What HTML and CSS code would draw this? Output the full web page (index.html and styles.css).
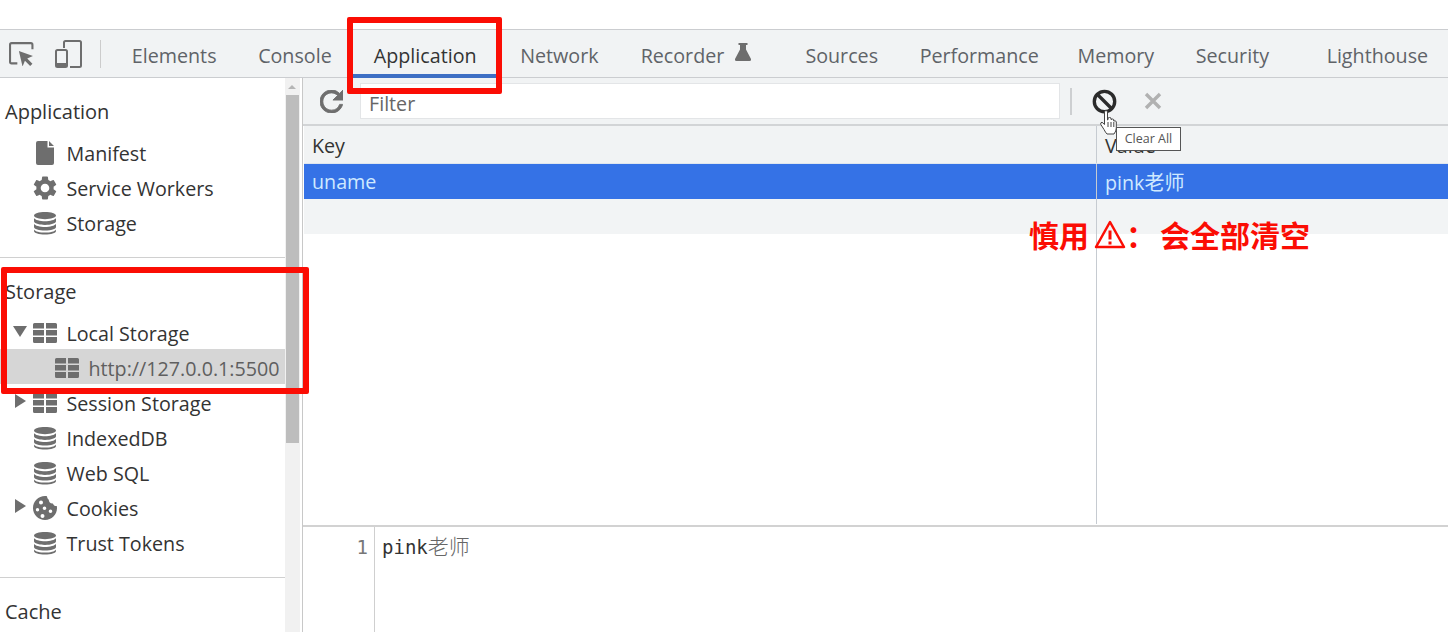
FILE: index.html
```html
<!DOCTYPE html>
<html lang="en">
<head>
<meta charset="utf-8">
<title>DevTools Application</title>
<link rel="stylesheet" href="styles.css">
</head>
<body>
<svg class="defs" width="0" height="0" aria-hidden="true">
  <symbol id="db" viewBox="0 0 24 24"><path d="M12 1C6 1 1 2.6 1 4.6S6 8.2 12 8.2s11-1.6 11-3.6S18 1 12 1zM1 7v3.2c0 2 5 3.7 11 3.7s11-1.7 11-3.700V7c-1 2-6 3.200-11 3.200S2 9 1 7zm0 5.800V16c0 2 5 3.600 11 3.600S23 18 23 16v-3.200c-1 2-6 3.200-11 3.200s-10-1.200-11-3.200zm0 5.600V20c0 2 5 3.600 11 3.600S23 22 23 20v-1.600c-1 2-6 3.200-11 3.200S2 20.400 1 18.400z"/></symbol>
  <symbol id="grid" viewBox="0 0 24 20"><path d="M0 1.500Q0 0 1.500 0H11v5.500H0zM13 0h9.500Q24 0 24 1.500v4H13zM0 7h11v5.500H0zM13 7h11v5.500H13zM0 14h11v6H1.500Q0 20 0 18.500zM13 14h11v4.500Q24 20 22.500 20H13z"/></symbol>
  <symbol id="gear" viewBox="2 2 20 20"><path d="M19.140 12.940c.04-.3.06-.61.06-.94 0-.32-.02-.64-.07-.94l2.030-1.580a.49.49 0 0 0 .12-.61l-1.920-3.320a.488.488 0 0 0-.59-.22l-2.390.96c-.5-.38-1.030-.7-1.620-.94l-.36-2.540a.484.484 0 0 0-.48-.41h-3.840c-.24 0-.43.17-.47.41l-.36 2.540c-.59.24-1.130.57-1.620.94l-2.390-.96c-.22-.08-.47 0-.59.22L2.740 8.870c-.12.21-.08.47.12.61l2.030 1.580c-.05.3-.09.63-.09.94s.02.64.07.94l-2.030 1.580a.49.49 0 0 0-.12.61l1.920 3.320c.12.22.37.29.59.22l2.390-.96c.5.38 1.030.7 1.620.94l.36 2.540c.05.24.24.41.48.41h3.840c.24 0 .44-.17.47-.41l.36-2.540c.59-.24 1.130-.56 1.620-.94l2.390.96c.22.08.47 0 .59-.22l1.920-3.320c.12-.22.07-.47-.12-.61l-2.010-1.580zM12 15.600c-1.980 0-3.600-1.620-3.600-3.600s1.620-3.600 3.600-3.600 3.600 1.620 3.600 3.600-1.620 3.600-3.600 3.600z"/></symbol>
  <symbol id="file" viewBox="0 0 18 24"><path d="M2 0h9.500v6.500H18V22q0 2-2 2H2q-2 0-2-2V2q0-2 2-2zM13 0l5 5h-5z"/></symbol>
  <symbol id="cookie" viewBox="0 0 24 24"><path fill-rule="evenodd" d="M12 0C5.400 0 0 5.400 0 12s5.400 12 12 12 12-5.400 12-12c0-.8-.1-1.300-.2-2-1.800.2-3.400-.9-3.900-2.600C17.600 7.800 15.700 6 15.800 3.800 14.500 3 14 1 14 .2 13.300.1 12.700 0 12 0zM8 4.500a2 2 0 1 1 0 4 2 2 0 0 1 0-4zM4.500 12a1.700 1.700 0 1 1 0 3.400 1.700 1.700 0 0 1 0-3.400zm7-1.500a1.800 1.800 0 1 1 0 3.600 1.800 1.800 0 0 1 0-3.600zm6 3a1.800 1.800 0 1 1 0 3.600 1.800 1.800 0 0 1 0-3.600zm-8 4.500a2 2 0 1 1 0 4 2 2 0 0 1 0-4z"/></symbol>
</svg>

<div class="page-top"></div>

<nav class="tabbar">
  <div class="tool-icons">
    <svg class="ic-inspect" viewBox="0 0 24 24"><path class="line" d="M8 21.500H2.500Q1 21.500 1 20V3.500Q1 2 2.500 2H21q1.500 0 1.500 1.500V8"/><path class="fill" d="M9.500 9.500l13.500 5-5.500 2.300 5 5-2.200 2.200-5-5-2.300 5.500z"/></svg>
    <svg class="ic-device" viewBox="0 0 27 28"><path class="line" d="M9 8V2.500Q9 1 10.500 1h14Q26 1 26 2.500v23q0 1.500-1.500 1.500H15"/><rect class="line" x="1" y="10" width="11" height="17" rx="1.500"/><path class="fill" d="M1 23h11v4H1z"/></svg>
  </div>
  <div class="tabs">
    <span class="tab">Elements</span>
    <span class="tab">Console</span>
    <span class="tab tab-active">Application</span>
    <span class="tab tab-network">Network</span>
    <span class="tab tab-flask">Recorder
      <svg class="ic-flask" viewBox="0 0 16 18"><path d="M3.500 0h9v2H11v4.500L16 16q.5 2-1.500 2h-13Q-.5 18 0 16L5 6.500V2H3.500z"/></svg>
    </span>
    <span class="tab">Sources</span>
    <span class="tab tab-perf">Performance</span>
    <span class="tab">Memory</span>
    <span class="tab">Security</span>
    <span class="tab tab-last">Lighthouse</span>
  </div>
</nav>

<div class="workspace">
  <aside class="sidebar">
    <div class="tree">
      <section class="section section-first">
        <h2 class="section-title">Application</h2>
        <div class="row"><svg class="ic ic-file"><use href="#file"/></svg><span>Manifest</span></div>
        <div class="row"><svg class="ic"><use href="#gear"/></svg><span>Service Workers</span></div>
        <div class="row"><svg class="ic"><use href="#db"/></svg><span>Storage</span></div>
      </section>
      <section class="section">
        <h2 class="section-title">Storage</h2>
        <div class="row"><i class="arrow arrow-down"></i><svg class="ic ic-grid"><use href="#grid"/></svg><span>Local Storage</span></div>
        <div class="row row-child"><svg class="ic ic-grid"><use href="#grid"/></svg><span>http://127.0.0.1:5500</span></div>
        <div class="row"><i class="arrow arrow-right"></i><svg class="ic ic-grid"><use href="#grid"/></svg><span>Session Storage</span></div>
        <div class="row"><svg class="ic"><use href="#db"/></svg><span>IndexedDB</span></div>
        <div class="row"><svg class="ic"><use href="#db"/></svg><span>Web SQL</span></div>
        <div class="row"><i class="arrow arrow-right"></i><svg class="ic"><use href="#cookie"/></svg><span>Cookies</span></div>
        <div class="row"><svg class="ic"><use href="#db"/></svg><span>Trust Tokens</span></div>
      </section>
      <section class="section section-last">
        <h2 class="section-title">Cache</h2>
      </section>
    </div>
    <div class="scrollbar">
      <i class="scroll-up"></i>
      <div class="scroll-thumb"></div>
    </div>
  </aside>

  <main class="main">
    <div class="filterbar">
      <svg class="ic-refresh" viewBox="4 4 16 16"><path d="M17.650 6.350A7.958 7.958 0 0 0 12 4c-4.420 0-7.990 3.580-7.990 8s3.570 8 7.990 8c3.730 0 6.840-2.550 7.730-6h-2.080A5.990 5.990 0 0 1 12 18c-3.310 0-6-2.690-6-6s2.690-6 6-6c1.660 0 3.140.69 4.220 1.780L13 11h7V4l-2.350 2.350z"/></svg>
      <div class="filter-input">Filter</div>
      <i class="filter-sep"></i>
      <svg class="ic-clear" viewBox="0 0 24 24"><circle cx="12" cy="12" r="9.800"/><path d="M5 5l14 14"/></svg>
      <svg class="ic-x" viewBox="0 0 18 18"><path d="M2 2l14 14M16 2L2 16"/></svg>
    </div>
    <div class="grid-wrap">
      <div class="grid-row grid-head"><div class="cell cell-key">Key</div><div class="cell">Value</div></div>
      <div class="grid-row grid-selected"><div class="cell cell-key">uname</div><div class="cell">pink<span class="cjk">老师</span></div></div>
      <div class="grid-row grid-odd"><div class="cell cell-key"></div><div class="cell"></div></div>
      <div class="grid-fill"><div class="cell-key"></div></div>
    </div>
    <div class="preview">
      <div class="gutter">1</div>
      <div class="code">pink<span class="code-cjk">老师</span></div>
    </div>
  </main>
</div>

<div class="callout callout-tab"></div>
<div class="callout callout-storage"></div>

<svg class="ic-hand" viewBox="0 0 17 25"><path d="M4.500 2Q4.500.5 6 .5T7.500 2v8l.5-.2V8q1.500-1 3 0v1.500q1.500-1 2.700 0V11q1.500-.6 2.600.6V18q0 3-2.300 6H7q-1.500-1.500-3-4.500L.8 14.500Q.2 12.500 2 12.200l2.500 2.300z"/><path d="M8 12v5M11 12v5M13.800 12v5"/></svg>
<div class="tooltip">Clear All</div>

<div class="warning">
  <span>慎用</span>
  <svg class="ic-warn" viewBox="0 0 32 29"><path class="tri" d="M16 2L30 27H2z"/><path class="bang" d="M16 10.500v9M16 21.500v3"/></svg>
  <span class="warn-colon">：</span>
  <span>会全部清空</span>
</div>
</body>
</html>
```

FILE: styles.css
```css
* { box-sizing: border-box; }
html, body { margin: 0; padding: 0; height: 632px; overflow: hidden; background: #fff; }
body { font-family: "Open Sans", "Noto Sans CJK SC", sans-serif; font-size: 19.700px; color: #333; position: relative; }
.defs { position: absolute; }
.page-top { background: #fff; border-bottom: 1px solid #cbcdd0; height: 30px; }

.tabbar { height: 48px; background: #f1f3f4; border-bottom: 1px solid #cbcdd0; display: flex; align-items: stretch; }
.tool-icons { width: 101px; flex: none; display: flex; align-items: center; padding: 0 0 0 9px; gap: 21px; position: relative; }
.tool-icons::after { content: ""; width: 1px; height: 28px; background: #ccc; position: absolute; left: 100px; top: 10px; }
.ic-inspect { width: 25px; height: 25px; flex: none; }
.ic-device { width: 27px; height: 28px; flex: none; }
.line { fill: none; stroke: #6e6e6e; stroke-width: 2; }
.fill { fill: #6e6e6e; }

.tabs { display: flex; align-items: stretch; padding-left: 10px; white-space: nowrap; }
.tab { display: flex; align-items: center; gap: 11px; padding: 4px 20.800px 0; color: #5f6368; height: 47px; font-size: 19.700px; }
.tab-active { color: #333; padding-left: 21.300px; padding-right: 22.800px; box-shadow: inset 0 -3px 0 #3e6fc4, 0 1px 0 #3e6fc4; }
.tab-network { margin-right: .5px; }
.ic-flask { width: 16px; height: 18px; fill: #6e6e6e; margin-top: -8px; margin-right: 12.500px; }
.tab-perf { margin-right: -3px; }
.tab-last { margin-left: 16px; }

.workspace { display: flex; height: 554px; }
.sidebar { width: 303px; flex: none; display: flex; border-right: 1px solid #c8c8c8; padding-right: 2px; }
.tree { width: 285px; flex: none; overflow: hidden; }
.section { border-bottom: 1px solid #d0d0d0; padding-bottom: 18px; }
.section-first { padding-top: 16px; }
.section-last { border-bottom: 0; }
.section-title { margin: 16px 0 5px; font-weight: 400; font-size: 20px; line-height: 35px; padding: 0 5px; height: 35px; color: #333; }
.section-first .section-title { margin-top: 0; }
.row { height: 35px; display: flex; align-items: center; position: relative; padding-left: 33px; padding-top: 3px; color: #333; white-space: nowrap; }
.row > span { margin-left: 9.500px; }
.row-child { padding-left: 55px; background: #d6d6d6; color: #5f5f5f; }
.ic { width: 24px; height: 24px; fill: #6e6e6e; flex: none; }
.ic-file { width: 18px; margin-left: 3px; margin-right: 3px; }
.ic-grid { height: 20px; }
.arrow { position: absolute; width: 0; height: 0; border-style: solid; top: 12px; }
.arrow-down { left: 13px; border-width: 11px 7px 0; border-color: #6e6e6e transparent transparent; }
.arrow-right { left: 15px; top: 10px; border-width: 7px 0 7px 11px; border-color: transparent transparent transparent #6e6e6e; }

.scrollbar { width: 15px; flex: none; background: #f1f1f1; position: relative; padding-top: 17px; }
.scroll-up { position: absolute; left: 3px; top: 7px; width: 0; height: 0; border-style: solid; border-width: 0 4px 4px; border-color: transparent transparent #b5b5b5; }
.scroll-thumb { height: 348px; background: #bdbdbd; margin: 0 1px; }

.main { flex: 1; display: flex; flex-direction: column; min-width: 0; }
.filterbar { height: 48px; flex: none; background: #f1f3f4; border-bottom: 2px solid #d2d4d6; display: flex; align-items: center; padding: 0 0 0 17px; }
.ic-refresh { width: 23px; height: 23px; fill: #6e6e6e; stroke: #6e6e6e; stroke-width: .6; flex: none; }
.filter-input { width: 700px; height: 36px; margin-left: 17px; background: #fff; border: 1px solid #e3e5e7; padding: 0 8px; line-height: 40px; color: #666; flex: none; }
.filter-sep { width: 2px; height: 27px; background: #cdcfd1; margin-left: 10px; flex: none; }
.ic-clear { width: 25px; height: 25px; margin-left: 20px; fill: none; stroke: #2b2b2b; stroke-width: 3.200; flex: none; }
.ic-x { width: 18px; height: 18px; margin-left: 27px; fill: none; stroke: #b1b1b1; stroke-width: 3.400; flex: none; }

.grid-wrap { height: 398px; flex: none; margin-left: 1px; display: flex; flex-direction: column; background: #fff; }
.grid-row { height: 35px; flex: none; display: flex; }
.grid-head { height: 38px; background: #f1f3f4; color: #333; border-bottom: 1px solid #dfe6ee; }
.grid-head .cell { line-height: 39px; }
.grid-selected { background: #3572e6; color: #cfe9ff; }
.grid-odd { background: #f2f4f5; }
.cell { padding: 0 8px; line-height: 35px; white-space: nowrap; }
.cell-key { width: 793px; flex: none; border-right: 1px solid #c6cbd1; }
.grid-fill { flex: 1; }
.grid-fill .cell-key { height: 100%; }
.cjk { font-family: "Noto Sans CJK SC", sans-serif; font-size: 20px; }

.preview { flex: 1; border-top: 2px solid #d2d2d2; display: flex; margin-top: 1px; }
.gutter { width: 72px; flex: none; border-right: 1px solid #cfcfcf; text-align: right; padding: 7px 6px 0 0; font-family: "DejaVu Sans Mono", monospace; font-size: 19px; line-height: 26px; color: #777; }
.code { padding: 5px 0 0 7px; font-family: "DejaVu Sans Mono", "Noto Sans CJK SC", monospace; font-size: 19px; line-height: 26px; color: #333; }
.code-cjk { font-family: "Noto Sans CJK SC", sans-serif; font-size: 21px; color: #666; font-weight: 300; }

.callout { position: absolute; border: 6px solid #fb0d04; border-radius: 2px; }
.callout-tab { left: 347px; top: 17px; width: 155px; height: 77px; }
.callout-storage { left: 1px; top: 267px; width: 308px; height: 127px; }

.tooltip { position: absolute; left: 1116px; top: 127px; width: 65px; height: 24px; background: #fff; border: 1px solid #555; font-size: 12.500px; line-height: 22px; text-align: center; color: #555; white-space: nowrap; }
.ic-hand { position: absolute; left: 1100px; top: 110px; width: 17px; height: 25px; fill: #fff; stroke: #444; stroke-width: 1; }
.warning { position: absolute; left: 1029px; top: 212px; height: 44px; display: flex; align-items: center; font-family: "Noto Sans CJK SC", sans-serif; font-weight: 700; font-size: 30px; color: #fb0d04; white-space: nowrap; }
.ic-warn { width: 32px; height: 29px; margin-left: 5px; flex: none; }
.tri { fill: none; stroke: #fb0d04; stroke-width: 2.500; stroke-linejoin: round; }
.bang { fill: none; stroke: #fb0d04; stroke-width: 3; }
.warn-colon { width: 34px; }
```
